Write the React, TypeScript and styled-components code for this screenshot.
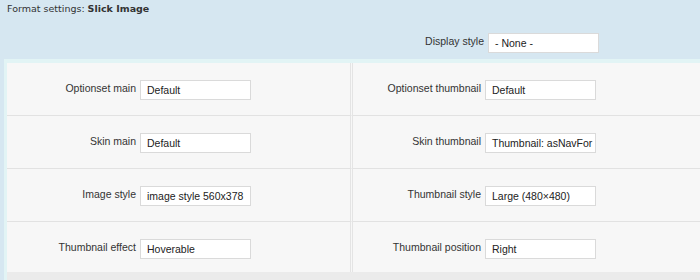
import { createGlobalStyle } from 'styled-components'
import styled from 'styled-components'

const GlobalStyle = createGlobalStyle`
    body {
        margin: 0;
        background: #d6e7f1;
        font-family: "Liberation Sans", Arial, sans-serif;
        color: #333;
    }
`

const Page = styled.div`
    width: 700px;
    height: 280px;
    overflow: hidden;
    background: #d6e7f1;
`
const Title = styled.div`
    padding: 3px 7px 0;
    height: 20px;
    font-family: "DejaVu Sans", Verdana, sans-serif;
    font-size: 9.5px;
    line-height: 12px;
    color: #333;
`
const DisplayRow = styled.div`
    display: flex;
    padding-left: 356px;
    margin-top: 10px;
    height: 20px;
`
const Panel = styled.div`
    display: grid;
    grid-template-columns: 346px 1fr;
    margin: 6px 0 0 4px;
    background: #f7f7f7;
    border-top: 4px solid #e2f4f5;
    border-left: 3px solid #e2f4f5;
`
const Cell = styled.div<{ $left?: boolean; $last?: boolean }>`
    display: flex;
    align-items: flex-start;
    box-sizing: border-box;
    height: ${(p) => (p.$last ? 50 : 53)}px;
    padding-top: 17px;
    padding-left: ${(p) => (p.$left ? 1 : 0)}px;
    border-bottom: ${(p) => (p.$last ? 'none' : '1px solid #e2e2e2')};
    border-right: ${(p) => (p.$left ? '3px double #e4e4e4' : 'none')};
`
const Label = styled.label`
    width: 128px;
    margin-right: 4px;
    padding-top: 2px;
    text-align: right;
    font-size: 10.5px;
    line-height: 13px;
    color: #333;
    white-space: nowrap;
`
const Input = styled.div`
    width: 111px;
    height: 20px;
    box-sizing: border-box;
    padding: 0 6px;
    background: #fff;
    border: 1px solid #dadada;
    font-size: 10.5px;
    line-height: 19px;
    color: #222;
    white-space: nowrap;
    overflow: hidden;
`
const Footer = styled.div`
    grid-column: 1 / 3;
    height: 8px;
    background: #ebebeb;
`

const rows: [string, string, string, string][] = [
    ['Optionset main', 'Default', 'Optionset thumbnail', 'Default'],
    ['Skin main', 'Default', 'Skin thumbnail', 'Thumbnail: asNavFor'],
    ['Image style', 'image style 560x378', 'Thumbnail style', 'Large (480\u00d7480)'],
    ['Thumbnail effect', 'Hoverable', 'Thumbnail position', 'Right'],
]

const App = () => {
    return (
        <Page>
            <GlobalStyle />
            <Title>
                Format settings: <b>Slick Image</b>
            </Title>
            <DisplayRow>
                <Label>Display style</Label>
                <Input>- None -</Input>
            </DisplayRow>
            <Panel>
                {rows.map((r, i) => {
                    const last = i === rows.length - 1
                    return [
                        <Cell key={'l' + i} $left $last={last}>
                            <Label>{r[0]}</Label>
                            <Input>{r[1]}</Input>
                        </Cell>,
                        <Cell key={'r' + i} $last={last}>
                            <Label>{r[2]}</Label>
                            <Input>{r[3]}</Input>
                        </Cell>,
                    ]
                })}
                <Footer />
            </Panel>
        </Page>
    )
}

export default App
